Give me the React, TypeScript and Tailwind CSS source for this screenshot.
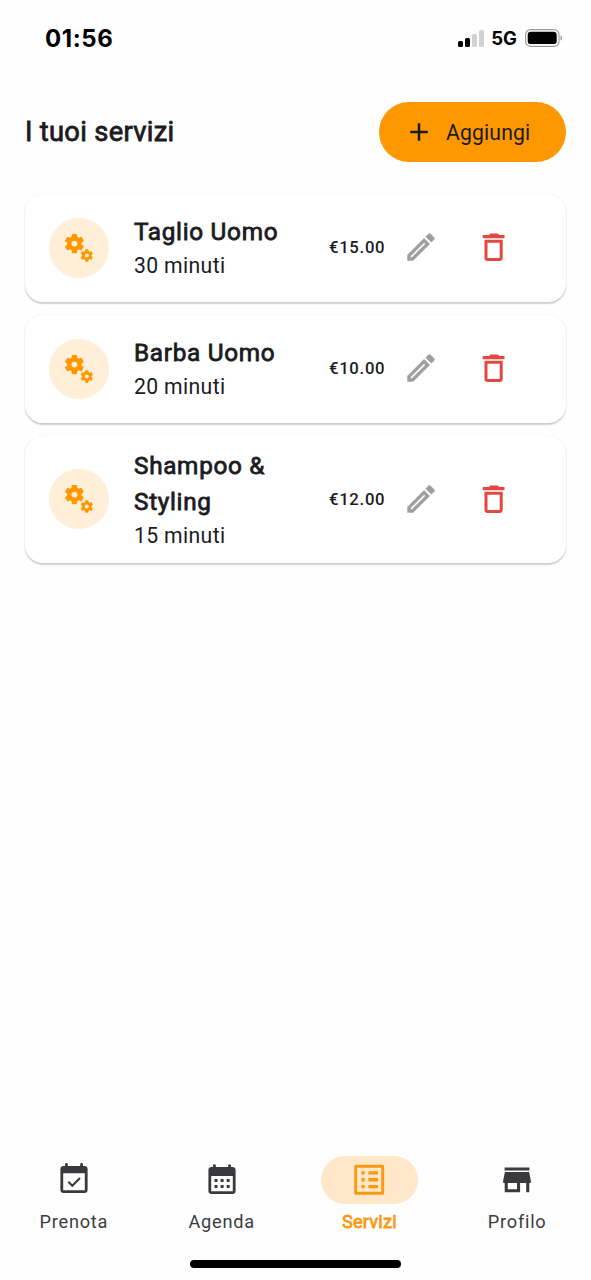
import { MdAdd } from "react-icons/md";

interface Service {
  name: string;
  minutes: number;
  price: string;
}

const services: Service[] = [
  { name: "Taglio Uomo", minutes: 30, price: "€15.00" },
  { name: "Barba Uomo", minutes: 20, price: "€10.00" },
  { name: "Shampoo & Styling", minutes: 15, price: "€12.00" },
];

const GearsIcon = () => (
  <svg viewBox="0 0 60 60" className="size-[60px]" fill="#ff9800">
    <g transform="translate(25.4 25.6)">
      <circle r="7.4" />
      <rect x="-2.7" y="-9.6" width="5.4" height="19.2" rx=".8" />
      <rect x="-2.7" y="-9.6" width="5.4" height="19.2" rx=".8" transform="rotate(60)" />
      <rect x="-2.7" y="-9.6" width="5.4" height="19.2" rx=".8" transform="rotate(120)" />
      <circle r="2.9" fill="#ffefd9" />
    </g>
    <g transform="translate(37.8 37.5)">
      <circle r="4.7" />
      <rect x="-1.7" y="-6.2" width="3.4" height="12.4" rx=".6" />
      <rect x="-1.7" y="-6.2" width="3.4" height="12.4" rx=".6" transform="rotate(60)" />
      <rect x="-1.7" y="-6.2" width="3.4" height="12.4" rx=".6" transform="rotate(120)" />
      <circle r="2" fill="#ffefd9" />
    </g>
  </svg>
);

const PencilIcon = () => (
  <svg viewBox="0 0 24 24" className="-mt-[2px] size-9 shrink-0" fill="#9e9e9e" stroke="#9e9e9e" strokeWidth=".3">
    <path d="m14.06 9.02.92.92L5.92 19H5v-.92l9.06-9.06M17.66 3c-.25 0-.51.1-.7.29l-1.83 1.83 3.75 3.75 1.83-1.83c.39-.39.39-1.02 0-1.41l-2.34-2.34c-.2-.2-.45-.29-.7-.29zm-3.6 3.19L3 17.25V21h3.75L17.81 9.94l-3.75-3.75z" />
  </svg>
);

const TrashIcon = () => (
  <svg viewBox="0 0 36 36" className="-mt-[2px] ml-[37px] size-9 shrink-0" fill="#e2483e">
    <path d="M6.7 6.1H13l1.4-1.6h7.4l1.4 1.6h5.3v3.2H6.7Z" />
    <path
      fillRule="evenodd"
      d="M8.5 10.7h18.2v18.2c0 1.7-1.3 3-3 3H11.5c-1.7 0-3-1.3-3-3ZM11.5 13.7v15.2h12.2V13.7Z"
    />
  </svg>
);

const BookIcon = () => (
  <svg viewBox="0 0 36 36" className="size-9" fill="#3a3a3e">
    <path d="M9 2.5a1.4 1.4 0 0 1 2.8 0v3H9Zm15.2 0a1.4 1.4 0 0 1 2.8 0v3h-2.8Z" />
    <path
      fillRule="evenodd"
      d="M7.4 4h21.2c1.700 0 3 1.300 3 3v21c0 1.700-1.300 3-3 3H7.400c-1.700 0-3-1.300-3-3V7c0-1.700 1.300-3 3-3ZM7.200 11.300v17h21.600v-17Z"
    />
    <path d="m12.3 19.8 4 4 7.700-7.900" fill="none" stroke="#3a3a3e" strokeWidth="2.1" />
  </svg>
);

const AgendaIcon = () => (
  <svg viewBox="0 0 36 36" className="size-9" fill="#3a3a3e">
    <path d="M9 3.600a1.400 1.400 0 0 1 2.800 0v3H9Zm15.200 0a1.400 1.400 0 0 1 2.800 0v3h-2.800Z" />
    <path
      fillRule="evenodd"
      d="M7.400 5h21.200c1.700 0 3 1.300 3 3v21c0 1.700-1.300 3-3 3H7.400c-1.700 0-3-1.300-3-3V8c0-1.700 1.300-3 3-3ZM7.200 14v15.300h21.600V14Z"
    />
    <path d="M10.500 17h3v3h-3zm6.100 0h3v3h-3zm6.100 0h3v3h-3zM10.500 23.100h3v3h-3zm6.100 0h3v3h-3zm6.100 0h3v3h-3z" />
  </svg>
);

const ListIcon = () => (
  <svg viewBox="0 0 36 36" className="size-9" fill="#f79a12">
    <rect x="4.7" y="4.3" width="27" height="27" rx=".4" fill="none" stroke="#f79a12" strokeWidth="2.9" />
    <path d="M10.500 9.300h3.300v3.300h-3.300zm6.900 0h9.700v3.300h-9.700zM10.500 16.100h3.300v3.300h-3.300zm6.900 0h9.700v3.300h-9.700zM10.500 22.900h3.300v3.300h-3.300zm6.900 0h9.700v3.300h-9.700z" />
  </svg>
);

const StoreIcon = () => (
  <svg viewBox="0 0 36 36" className="size-9" fill="#3a3a3e">
    <path
      fillRule="evenodd"
      d="M5.6 5.400h24.800v3.100H5.600zM5.900 9.900h24.200l1.700 8.400v2.800h-1.500v9.200h-3.100v-9.200h-6.100v9.200H5.700v-9.200H4.200v-2.800ZM8.800 21.100v6.100h9.200v-6.100Z"
    />
  </svg>
);

const StatusBar = () => (
  <div className="flex h-[76px] items-center justify-between pl-[45px] pr-7 text-black">
    <span className="mt-px font-['Inter'] text-[24px] font-bold tracking-[0.6px]">01:56</span>
    <div className="flex items-center">
      <div className="mr-[7px] flex items-end gap-[2px]">
        <span className="h-[6px] w-[5px] rounded-[1.5px] bg-black" />
        <span className="h-[9px] w-[5px] rounded-[1.5px] bg-black" />
        <span className="h-[13px] w-[5px] rounded-[1.5px] bg-[#d2d2d2]" />
        <span className="h-[17px] w-[5px] rounded-[1.5px] bg-[#d2d2d2]" />
      </div>
      <span className="mr-2 mt-[2px] font-['Inter'] text-[18.5px] font-bold">5G</span>
      <svg viewBox="0 0 38 18" className="h-[18px] w-[38px]">
        <rect x=".6" y=".6" width="33.4" height="16.8" rx="5" fill="none" stroke="#989898" strokeWidth="1.1" />
        <rect x="2.7" y="2.7" width="29" height="12.4" rx="3.2" />
        <path d="M35.5 6.5c2 .6 2 4.4 0 5Z" fill="#989898" />
      </svg>
    </div>
  </div>
);

const ServiceCard = ({ service }: { service: Service }) => (
  <div className="flex items-center rounded-[18px] bg-white pl-6 shadow-[0_1.5px_1.5px_rgba(0,0,0,0.18),0_0_2px_rgba(0,0,0,0.06)]">
    <div className="-mt-px size-[60px] shrink-0 rounded-full bg-[#ffefd9]">
      <GearsIcon />
    </div>
    <div className="ml-[25px] w-[195px] py-[10px]">
      <h2 className="w-[160px] text-[24.3px] leading-[36px] tracking-[0.7px] [-webkit-text-stroke:0.8px]">{service.name}</h2>
      <p className="-mt-px text-[21.2px] leading-[33px] tracking-[0.35px]">{service.minutes} minuti</p>
    </div>
    <span className="w-[74px] text-[16.7px] font-medium tracking-[0.7px]">{service.price}</span>
    <PencilIcon />
    <TrashIcon />
  </div>
);

const App = () => {
  return (
    <div className="flex h-[1280px] w-[591px] flex-col bg-[#fefefe] font-['Roboto',sans-serif] text-[#1b1b1f]">
      <StatusBar />
      <header className="mt-[26px] flex h-[60px] items-center justify-between px-[25px]">
        <h1 className="mt-px text-[27.3px] tracking-[0.3px] [-webkit-text-stroke:0.8px]">I tuoi servizi</h1>
        <button className="flex h-[60px] w-[187px] items-center rounded-full bg-[#ff9800] pl-[25px] text-[21.2px] tracking-[0.15px]">
          <MdAdd className="size-[30px]" />
          <span className="ml-[12px] mt-px">Aggiungi</span>
        </button>
      </header>
      <main className="mt-8 grid grid-rows-[108px_108px_127px] gap-[13px] px-[25px]">
        {services.map((service) => (
          <ServiceCard key={service.name} service={service} />
        ))}
      </main>
      <nav className="mt-auto grid h-[80px] grid-cols-4 text-[18.2px] tracking-[0.75px] text-[#3c3c40]">
        <div className="flex flex-col items-center">
          <div className="flex h-12 items-center"><BookIcon /></div>
          <span className="mt-1">Prenota</span>
        </div>
        <div className="flex flex-col items-center">
          <div className="flex h-12 items-center"><AgendaIcon /></div>
          <span className="mt-1">Agenda</span>
        </div>
        <div className="flex flex-col items-center">
          <div className="flex h-12 w-[97px] items-center justify-center rounded-full bg-[#ffe7c9]">
            <ListIcon />
          </div>
          <span className="mt-1 tracking-[0.2px] text-[#f79a12] [-webkit-text-stroke:0.8px]">Servizi</span>
        </div>
        <div className="flex flex-col items-center">
          <div className="flex h-12 items-center"><StoreIcon /></div>
          <span className="mt-1">Profilo</span>
        </div>
      </nav>
      <div className="mx-auto mb-3 mt-6 h-2 w-[211px] shrink-0 rounded-full bg-black" />
    </div>
  );
};

export default App;
